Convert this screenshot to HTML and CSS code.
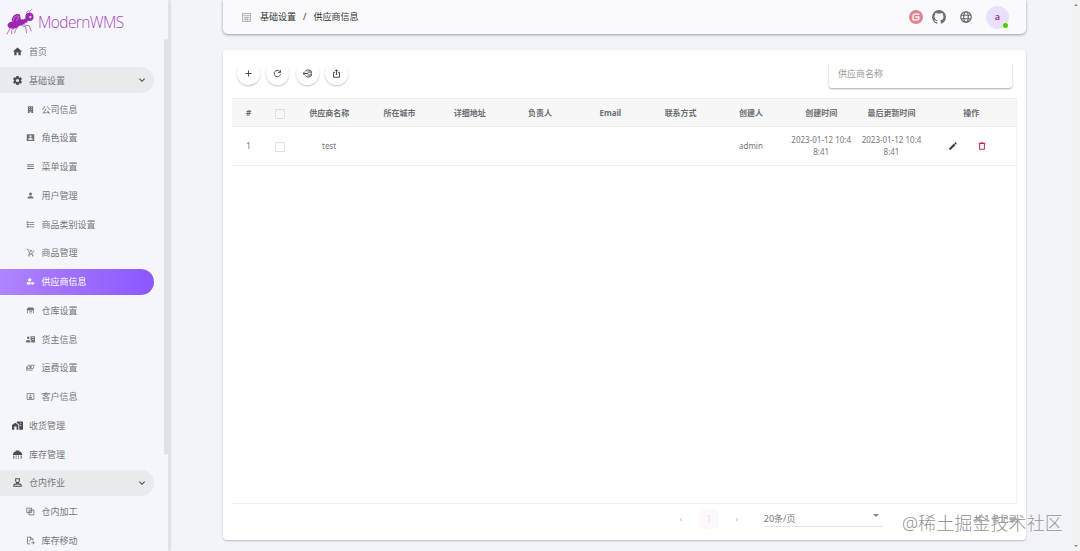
FILE: index.html
```html
<!DOCTYPE html>
<html lang="zh-CN">
<head>
    <meta charset="UTF-8">
    <meta name="viewport" content="width=device-width, initial-scale=1.0">
    <title>ModernWMS</title>
    <link rel="stylesheet" href="styles.css">
</head>
<body>
    <div class="app">
        <aside class="sidebar">
            <div class="logo">
                <svg class="logo-img" viewBox="0 0 32 30">
                    <g fill="none" stroke="#9c27b0" stroke-width=".7">
                        <path d="M5 19L3 23L1 27M9 20L6 23V27M12 19L10 23L9 26M17 18L21 19L22 26M19 17L25 18L27 24"/>
                        <path d="M23 7L22 4L25 1M26 6L25 3L28 0"/>
                    </g>
                    <g fill="#9c27b0">
                        <ellipse cx="8" cy="17" rx="6.500" ry="4" transform="rotate(-8 8 17)"/>
                        <ellipse cx="15.500" cy="14.500" rx="6" ry="3.200" transform="rotate(-15 15.500 14.500)"/>
                        <path d="M6 12C7 6 11 4 15 6L16 13L9 15Z"/>
                        <circle cx="25" cy="8.500" r="4.400"/>
                        <circle cx="21" cy="12.500" r="2.300"/>
                    </g>
                    <path d="M8 12C8 8 11 7 13 8M11 13L14 8" fill="none" stroke="#d9a6e3" stroke-width=".7"/>
                    <circle cx="26" cy="8.500" r="1.300" fill="#e9cdf0"/>
                </svg>
                <span class="logo-text">ModernWMS</span>
            </div>
            <nav class="menu">
                <div class="item"><svg class="icon" viewBox="0 0 24 24"><path d="M10,20V14H14V20H19V12H22L12,3L2,12H5V20H10Z"/></svg>首页</div>
                <div class="item group"><svg class="icon" viewBox="0 0 24 24"><path d="M12,15.5A3.5,3.5 0 0,1 8.5,12A3.5,3.5 0 0,1 12,8.5A3.5,3.5 0 0,1 15.5,12A3.5,3.5 0 0,1 12,15.5M19.43,12.97C19.47,12.65 19.5,12.33 19.5,12C19.5,11.67 19.47,11.34 19.43,11L21.54,9.37C21.73,9.22 21.78,8.95 21.66,8.73L19.66,5.27C19.54,5.05 19.27,4.96 19.05,5.05L16.56,6.05C16.04,5.66 15.5,5.32 14.87,5.07L14.5,2.42C14.46,2.18 14.25,2 14,2H10C9.75,2 9.54,2.18 9.5,2.42L9.13,5.07C8.5,5.32 7.96,5.66 7.44,6.05L4.95,5.05C4.73,4.96 4.46,5.05 4.34,5.27L2.34,8.73C2.21,8.95 2.27,9.22 2.46,9.37L4.57,11C4.53,11.34 4.5,11.67 4.5,12C4.5,12.33 4.53,12.65 4.57,12.97L2.46,14.63C2.27,14.78 2.21,15.05 2.34,15.27L4.34,18.73C4.46,18.95 4.73,19.03 4.95,18.95L7.44,17.94C7.96,18.34 8.5,18.68 9.13,18.93L9.5,21.58C9.54,21.82 9.75,22 10,22H14C14.25,22 14.46,21.82 14.5,21.58L14.87,18.93C15.5,18.67 16.04,18.34 16.56,17.94L19.05,18.95C19.27,19.03 19.54,18.95 19.66,18.73L21.66,15.27C21.78,15.05 21.73,14.78 21.54,14.63L19.43,12.97Z"/></svg>基础设置<svg class="icon arrow" viewBox="0 0 24 24"><path d="M7.41,8.58L12,13.17L16.59,8.58L18,10L12,16L6,10Z"/></svg></div>
                <div class="item sub"><svg class="icon" viewBox="0 0 24 24"><path d="M5 3H19V21H14V17H10V21H5ZM8 6V8H10V6ZM14 6V8H16V6ZM8 11V13H10V11ZM14 11V13H16V11Z"/></svg>公司信息</div>
                <div class="item sub"><svg class="icon" viewBox="0 0 24 24"><path fill-rule="evenodd" d="M2 3H22V21H2ZM12 6A3 3 0 0 0 12 12A3 3 0 0 0 12 6M6 18H18V16C18 14 14 13 12 13S6 14 6 16Z"/></svg>角色设置</div>
                <div class="item sub"><svg class="icon" viewBox="0 0 24 24"><path d="M3 6H21V8.500H3ZM3 11H21V13.500H3ZM3 16H21V18.500H3Z"/></svg>菜单设置</div>
                <div class="item sub"><svg class="icon" viewBox="0 0 24 24"><path d="M12,4A4,4 0 0,1 16,8A4,4 0 0,1 12,12A4,4 0 0,1 8,8A4,4 0 0,1 12,4M12,14C16.42,14 20,15.79 20,18V20H4V18C4,15.79 7.58,14 12,14Z"/></svg>用户管理</div>
                <div class="item sub"><svg class="icon" viewBox="0 0 24 24"><path d="M2 4H7V8H2ZM2 10H7V14H2ZM2 16H7V20H2ZM9 5H22V7H9ZM9 11H22V13H9ZM9 17H22V19H9Z"/></svg>商品类别设置</div>
                <div class="item sub"><svg class="icon" viewBox="0 0 24 24"><path d="M1 3H5L9 14H17L21 6M9 14L7 17H19M9 4L17 11M17 4L9 11" fill="none" stroke="currentColor" stroke-width="1.800"/><circle cx="8" cy="20.500" r="2"/><circle cx="18" cy="20.500" r="2"/></svg>商品管理</div>
                <div class="item sub active"><svg class="icon" viewBox="0 0 24 24"><path d="M10 3A4 4 0 0 1 10 12A4 4 0 0 1 10 3M2 20V17C2 14 7 13 11 14L14 20ZM14 14H22V17L18 21L14 18Z"/></svg>供应商信息</div>
                <div class="item sub"><svg class="icon" viewBox="0 0 24 24"><path d="M5 4H19L22 9V12H2V9ZM3 13H5V19H3ZM19 13H21V19H19ZM8 14H10V16H8ZM12 14H16V16H12ZM8 18H16V19H8Z"/></svg>仓库设置</div>
                <div class="item sub"><svg class="icon" viewBox="0 0 24 24"><path fill-rule="evenodd" d="M6 4A3 3 0 0 1 6 11A3 3 0 0 1 6 4M0 20V16C0 13 9 12 12 15V20ZM12 3H24V20H14V13H12ZM15 6V8H21V6ZM17 11V13H21V11Z"/></svg>货主信息</div>
                <div class="item sub"><svg class="icon" viewBox="0 0 24 24"><path d="M6 6H22L19 15H3ZM1 9V19H18" fill="none" stroke="currentColor" stroke-width="2"/><circle cx="12" cy="10.500" r="3"/></svg>运费设置</div>
                <div class="item sub"><svg class="icon" viewBox="0 0 24 24"><path d="M3 4H21V20H3Z" fill="none" stroke="currentColor" stroke-width="2"/><circle cx="12" cy="9" r="2.500"/><path d="M7 17C7 12 17 12 17 17Z"/></svg>客户信息</div>
                <div class="item"><svg class="icon" viewBox="0 0 24 24"><path d="M0 21V11L7 6L14 11V21H10V14H5V21ZM11 3H24V21H16V10L10 6ZM18 6V8H20V6ZM18 11V13H20V11Z" fill-rule="evenodd"/></svg>收货管理</div>
                <div class="item"><svg class="icon" viewBox="0 0 24 24"><path d="M8 3H16V6H19L22 11V13H2V11L5 6H8ZM3 14H5V21H3ZM19 14H21V21H19ZM8 14H10V17H8ZM13 14H15V17H13ZM8 19H10V21H8ZM13 19H15V21H13Z"/></svg>库存管理</div>
                <div class="item group"><svg class="icon" viewBox="0 0 24 24"><path d="M8 4H16V8A4 4 0 0 1 8 8ZM4 20V18C4 14 20 14 20 18V20ZM10 12V15M14 12V15" fill="none" stroke="currentColor" stroke-width="2.200"/></svg>仓内作业<svg class="icon arrow" viewBox="0 0 24 24"><path d="M7.41,8.58L12,13.17L16.59,8.58L18,10L12,16L6,10Z"/></svg></div>
                <div class="item sub"><svg class="icon" viewBox="0 0 24 24"><path d="M2 3H15V15H2ZM8 8H21V21H8V8M8 15L15 8" fill="none" stroke="currentColor" stroke-width="2.200"/></svg>仓内加工</div>
                <div class="item sub"><svg class="icon" viewBox="0 0 24 24"><path d="M11 21H4V3H13L19 9V12M12 3V9H18M7 13H12M14 18H22M18 14L22 18L18 22" fill="none" stroke="currentColor" stroke-width="2.200"/></svg>库存移动</div>
            </nav>
            <div class="side-scroll"></div>
        </aside>

        <main class="main">
            <header class="topbar">
                <svg class="crumb-icon" viewBox="0 0 10 10"><path d="M.5 .5H9.500V9.500H.5Z" fill="#eee" stroke="#999" stroke-width=".8"/><path d="M1 2.800H9M2 5H8M2 7H8M4 4V9M6 4V9" stroke="#aaa" stroke-width=".7"/></svg>
                <span>基础设置</span><span class="slash">/</span><span>供应商信息</span>
                <div class="tools">
                    <svg class="gitee" viewBox="0 0 24 24"><circle cx="12" cy="12" r="12" fill="#df8490"/><path d="M18 7H10Q7 7 7 10V17H14Q17 17 17 14V12H11" fill="none" stroke="#fff" stroke-width="2.200"/></svg>
                    <svg class="github" viewBox="2 2 20 20"><path d="M12,2A10,10 0 0,0 2,12C2,16.42 4.87,20.17 8.84,21.5C9.34,21.58 9.5,21.27 9.5,21C9.5,20.77 9.5,20.14 9.5,19.31C6.73,19.91 6.14,17.97 6.14,17.97C5.68,16.81 5.03,16.5 5.03,16.5C4.12,15.88 5.1,15.9 5.1,15.9C6.1,15.97 6.63,16.93 6.63,16.93C7.5,18.45 8.97,18 9.54,17.76C9.63,17.11 9.89,16.67 10.17,16.42C7.95,16.17 5.62,15.31 5.62,11.5C5.62,10.39 6,9.5 6.65,8.79C6.55,8.54 6.2,7.5 6.75,6.15C6.75,6.15 7.59,5.88 9.5,7.17C10.29,6.95 11.15,6.84 12,6.84C12.85,6.84 13.71,6.95 14.5,7.17C16.41,5.88 17.25,6.15 17.25,6.15C17.8,7.5 17.45,8.54 17.35,8.79C18,9.5 18.38,10.39 18.38,11.5C18.38,15.32 16.04,16.16 13.81,16.41C14.17,16.72 14.5,17.33 14.5,18.26C14.5,19.6 14.5,20.68 14.5,21C14.5,21.27 14.66,21.59 15.17,21.5C19.14,20.16 22,16.42 22,12A10,10 0 0,0 12,2Z"/></svg>
                    <svg class="globe" viewBox="0 0 24 24" fill="none" stroke="#666" stroke-width="2.400"><circle cx="12" cy="12" r="10.500"/><ellipse cx="12" cy="12" rx="4.500" ry="10.500"/><path d="M2 8.500H22M2 15.500H22"/></svg>
                    <div class="avatar">a<i class="online"></i></div>
                </div>
            </header>

            <section class="card">
                <div class="toolbar">
                    <button class="btn"><svg viewBox="0 0 24 24"><path d="M12 4V20M4 12H20"/></svg></button>
                    <button class="btn"><svg viewBox="0 0 24 24"><path d="M18.500 7A8.500 8.500 0 1 0 20 14M20 3V9.500H13.500"/></svg></button>
                    <button class="btn"><svg viewBox="0 0 24 24"><path d="M6 7Q7 3 12 3H16Q22 3 22 6V18Q22 21 16 21H12Q7 21 6 17M0 12H14M4 8L0 12L4 16M12 8H22M12 16H22"/></svg></button>
                    <button class="btn"><svg viewBox="0 0 24 24"><path d="M8 9H4V22H20V9H16M12 16V2M8 6L12 2L16 6"/></svg></button>
                    <div class="search">供应商名称</div>
                </div>
                <div class="table">
                    <div class="row head">
                        <div>#</div><div><i class="check"></i></div><div>供应商名称</div><div>所在城市</div><div>详细地址</div><div>负责人</div><div>Email</div><div>联系方式</div><div>创建人</div><div>创建时间</div><div>最后更新时间</div><div>操作</div>
                    </div>
                    <div class="row">
                        <div>1</div><div><i class="check"></i></div><div>test</div><div></div><div></div><div></div><div></div><div></div><div>admin</div><div>2023-01-12 10:4<br>8:41</div><div>2023-01-12 10:4<br>8:41</div>
                        <div class="ops">
                            <svg class="edit" viewBox="0 0 24 24"><path d="M20.71,7.04C21.1,6.65 21.1,6 20.71,5.63L18.37,3.29C18,2.9 17.35,2.9 16.96,3.29L15.12,5.12L18.87,8.87M3,17.25V21H6.75L17.81,9.93L14.06,6.18L3,17.25Z"/></svg>
                            <svg class="delete" viewBox="0 0 24 24"><path d="M9,3V4H4V6H5V19A2,2 0 0,0 7,21H17A2,2 0 0,0 19,19V6H20V4H15V3H9M7.500,7H16.500V18.500H7.500V7Z"/></svg>
                        </div>
                    </div>
                </div>
                <footer class="pager">
                    <span class="page-arrow">‹</span>
                    <span class="page">1</span>
                    <span class="page-arrow">›</span>
                    <div class="page-size">20条/页<i class="caret"></i></div>
                    <span class="total">共 1 条记录</span>
                </footer>
            </section>
        </main>

        <div class="scrollbar"><i class="up"></i><i class="down"></i></div>
        <div class="watermark">@稀土掘金技术社区</div>
    </div>
</body>
</html>
```
FILE: styles.css
```css
* { box-sizing: border-box; }
body {
    margin: 0;
    height: 551px;
    overflow: hidden;
    background: #f3f4f9;
    color: #75767a;
    font-family: "Noto Sans", "Noto Sans CJK SC", sans-serif;
    font-size: 9px;
}
svg { display: block; fill: currentColor; flex: none; }
.app { display: flex; height: 551px; position: relative; }

/* sidebar */
.sidebar {
    position: relative;
    width: 169px;
    height: 551px;
    overflow: hidden;
    flex: none;
    background: #f5f6fb;
    border-right: 1px solid #e3e4e8;
    box-shadow: 1px 0 3px #cfd0d5;
}
.logo { display: flex; height: 38.5px; padding: 9px 0 0 6px; }
.logo-img { width: 30px; height: 28px; }
.logo-text {
    margin-left: 2px;
    color: #ab47bc;
    font: 300 15.5px/27px "Open Sans", sans-serif;
    letter-spacing: -.6px;
}
.menu { display: flex; flex-direction: column; gap: 2.77px; }
.item {
    display: flex;
    align-items: center;
    flex: none;
    width: 154px;
    height: 26px;
    padding-left: 12px;
    border-radius: 0 13px 13px 0;
    white-space: nowrap;
}
.item .icon { width: 11px; height: 11px; margin-right: 6px; color: #4c4d52; }
.group { background: #e9eaee; }
.item .arrow { width: 12px; height: 12px; margin: 0 6px 0 auto; }
.sub { padding-left: 26px; }
.sub .icon { width: 9px; height: 9px; margin-right: 6.5px; color: #707176; }
.active { background: linear-gradient(90deg, #af84ff, #8c57ff); color: #fff; }
.active .icon { color: #fff; }
.side-scroll {
    position: absolute;
    top: 39px;
    right: 0;
    width: 4px;
    height: 416px;
    background: #e0e1e5;
    border-radius: 2px;
}

/* header */
.main { width: 803px; margin-left: 54px; flex: none; }
.topbar {
    display: flex;
    align-items: center;
    height: 34px;
    padding-left: 19px;
    background: #fafafd;
    color: #333;
    border-radius: 0 0 5px 5px;
    box-shadow: 0 1px 3px #999ba3;
}
.topbar > span { margin-bottom: 1px; }
.crumb-icon { width: 9px; height: 9px; margin-right: 9px; }
.topbar > .slash { margin: 0 7px 1px; }
.tools { display: flex; align-items: center; margin-left: auto; padding-right: 17px; }
.gitee { width: 14px; height: 14px; margin-right: 9px; }
.github { width: 14px; height: 14px; margin-right: 14px; color: #707070; }
.globe { width: 12px; height: 12px; margin-right: 14px; fill: none; }
.avatar {
    position: relative;
    width: 23px;
    height: 23px;
    border-radius: 50%;
    background: #e9e1f9;
    color: #9c27b0;
    font-weight: 600;
    line-height: 22px;
    text-align: center;
}
.online {
    position: absolute;
    right: 1px;
    bottom: 1px;
    width: 5px;
    height: 5px;
    border-radius: 50%;
    background: #56ca00;
}

/* content */
.card {
    height: 490px;
    margin-top: 16px;
    padding: 11px 9px 0;
    background: #fff;
    border-radius: 4px;
    box-shadow: 0 1px 2px #b9bac0;
}
.toolbar { display: flex; height: 37px; padding: 0 5px; }
.btn {
    display: flex;
    align-items: center;
    justify-content: center;
    width: 23px;
    height: 23px;
    margin: 1px 6.300px 0 0;
    padding: 0;
    border: 0;
    border-radius: 50%;
    background: #fff;
    box-shadow: 0 1px 2px #c4c4c4;
    clip-path: inset(9px -3px -4px);
    clip-path: inset(6px -3px -4px);
}
.btn svg { width: 9px; height: 9px; fill: none; stroke: #444; stroke-width: 2.500; }
.search {
    width: 183px;
    height: 27px;
    margin-left: auto;
    padding-left: 9px;
    line-height: 26px;
    color: #999;
    border-radius: 3px;
    box-shadow: 0 1px 2px #aaa;
    clip-path: inset(2px -2px -4px);
}
.table {
    height: 406px;
    border: 1px solid #f0f0f0;
    border-left: 0;
    font-size: 8px;
    line-height: 12px;
}
.row {
    display: grid;
    grid-template-columns: 33px 29px repeat(9, 70.300px) 1fr;
    align-items: center;
    height: 39px;
    border-bottom: 1px solid #ececec;
    text-align: center;
    white-space: nowrap;
}
.head { height: 28px; background: #f7f7f7; font-weight: 700; color: #6c6e72; }
.check {
    display: block;
    width: 10px;
    height: 10px;
    margin: 2px auto 0;
    border: 1px solid #dcdfe6;
    border-radius: 1px;
    background: #fff;
}
.head .check { background: transparent; }
.ops { display: flex; justify-content: center; gap: 19px; padding-right: 7px; }
.ops svg { width: 10px; height: 10px; }
.edit { color: #444; }
.delete { color: #b83243; }
.pager { display: flex; align-items: center; height: 29px; padding-left: 446px; }
.page-arrow { width: 6px; color: #bbb; text-align: center; }
.page {
    width: 20px;
    height: 20px;
    margin: 0 15px;
    border-radius: 5px;
    background: #fdf8fc;
    color: #ecd3ee;
    font-size: 8px;
    line-height: 20px;
    text-align: center;
}
.page-size {
    display: flex;
    justify-content: space-between;
    width: 120px;
    height: 17px;
    margin-left: 24px;
    line-height: 17px;
    border-bottom: 1px solid #e4e4e4;
}
.caret {
    margin: 4px 4px 0 0;
    width: 0;
    height: 0;
    border: 3px solid transparent;
    border-top-color: #888;
    border-bottom: 0;
}
.total { margin: 0 0 2px 91px; white-space: nowrap; font-size: 8.500px; }

/* window scrollbar */
.scrollbar {
    display: flex;
    flex-direction: column;
    align-items: center;
    justify-content: space-between;
    width: 9px;
    margin-left: auto;
    padding: 4px 0;
    background: #f2f2f3;
}
.scrollbar i { width: 0; height: 0; border: 2px solid transparent; }
.scrollbar .up { border-top: 0; border-bottom-color: #888; }
.scrollbar .down { border-bottom: 0; border-top-color: #888; }
.watermark {
    position: absolute;
    top: 510px;
    left: 902px;
    color: #949497;
    font-size: 18.100px;
    font-weight: 300;
    line-height: 26px;
    white-space: nowrap;
    text-shadow: 0 0 1px #fff;
}
```
